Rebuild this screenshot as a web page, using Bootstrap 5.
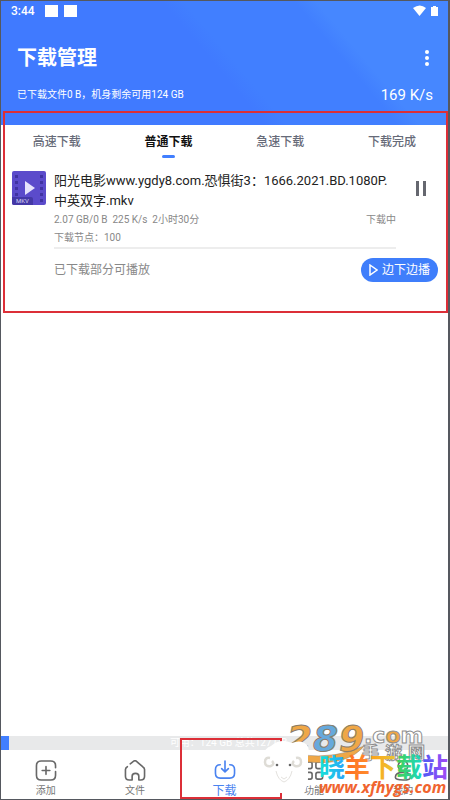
<!DOCTYPE html>
<html lang="zh-CN">
<head>
<meta charset="utf-8">
<meta name="viewport" content="width=device-width, initial-scale=1">
<title>下载管理</title>
<link href="https://cdn.jsdelivr.net/npm/bootstrap@5.3.0/dist/css/bootstrap.min.css" rel="stylesheet">
<style>
  body { font-family: Roboto, "Noto Sans CJK SC", sans-serif; font-size: 12px; background: #fff; color: #222; }
  .screen { border: 1px solid #55585f; border-right-width: 2px; }
  .app-head { background: linear-gradient(50deg, #407aff 0 48%, #417fff 52% 72%, #4687ff 76%); color: #fff; height: 124px; padding: 0 15px 0 16px; }
  .status { height: 20px; padding-left: 10px; margin-left: -16px; margin-right: -6px; }
  .status .clock { font-size: 12px; font-weight: 500; line-height: 20px; }
  .block-sq { width: 13px; height: 12px; background: #fff; margin-left: 6px; }
  .head-title { font-size: 20px; line-height: 28px; font-weight: 700; }
  .head-row { margin-top: 23px; }
  .head-info { margin-top: 13px; line-height: 20px; }
  .head-info .used { font-size: 10px; }
  .speed { font-size: 15px; }
  .plain { background: none; border: 0; padding: 0; color: inherit; }
  .tab { font-size: 12px; line-height: 18px; padding: 8px 0 0; color: #666a78; height: 34px; font-weight: 500; }
  .tab.active { color: #111; font-weight: 700; }
  .tab.active::after { content: ""; display: block; width: 13px; height: 3px; border-radius: 2px; background: #417fff; margin: 4px auto 0; }
  .item { padding: 12px 11px 0; }
  .thumb { margin-right: 8px; }
  .file-name { font-size: 13px; line-height: 20px; color: #222; overflow-wrap: anywhere; }
  .meta { font-size: 10px; line-height: 18px; color: #888; }
  .node-line { border-bottom: 2px solid #ededed; }
  .pause { width: 41px; height: 33px; padding-left: 9px; }
  .hint { font-size: 12px; color: #888; }
  .play-row { padding: 9px 10px 0 53px; }
  .play-btn { background: #3f7efb; color: #fff; border: 0; border-radius: 12px; height: 24px; width: 77px; font-size: 12px; line-height: 24px; }
  .storage { height: 14px; background: #e8e9ea; color: #fff; font-size: 10px; line-height: 14px; }
  .storage-used { width: 8px; background: #417fff; }
  .bottom a { height: 49px; padding-top: 10px; color: #777; font-size: 10px; line-height: 16px; }
  .bottom a svg { margin-bottom: 2px; }
  .bottom a.active { color: #4a83f0; font-size: 12px; }
  .outline { border: 2px solid #dc2f38; pointer-events: none; }
  .outline-list { left: 2px; right: 0; top: 110px; height: 202px; }
  .outline-tab { left: 179px; width: 102px; bottom: 0; height: 61px; }
  .stamp { right: 0; bottom: 0; width: 192px; height: 80px; pointer-events: none; }
  .stamp-name { font: 700 26px "Noto Sans CJK SC", sans-serif; }
  .stamp-url { font: italic 700 16px "Open Sans", sans-serif; fill: #f0642f; }
  .stamp-num { font: italic 700 36px "DejaVu Sans", sans-serif; fill: #efa747; stroke: #8b7c69; stroke-width: 1px; }
  .stamp-com { font: 700 22px "DejaVu Sans", sans-serif; fill: #fff; stroke: #8e8e8e; stroke-width: 1px; }
  .stamp-cn { font: 700 17px "Noto Sans CJK SC", sans-serif; fill: #fff; stroke: #8e8e8e; stroke-width: 1px; }
</style>
</head>
<body>
<div class="screen position-relative d-flex flex-column min-vh-100 overflow-hidden">
  <header class="app-head">
    <div class="status d-flex align-items-center">
      <span class="clock me-1">3:44</span>
      <span class="block-sq"></span><span class="block-sq"></span>
      <svg class="ms-auto" width="26" height="14" viewBox="0 0 26 14" fill="#fff" aria-hidden="true"><path d="M0 4Q7-1 13 4L6.500 12ZM18 3h2V2h3v1h2v9h-7z"/></svg>
    </div>
    <div class="head-row d-flex align-items-center justify-content-between">
      <h1 class="head-title mb-0">下载管理</h1>
      <button class="plain d-flex" type="button" aria-label="更多"><svg width="12" height="18" viewBox="0 0 12 18" fill="#fff"><circle cx="6" cy="3" r="2"/><circle cx="6" cy="9" r="2"/><circle cx="6" cy="15" r="2"/></svg></button>
    </div>
    <div class="head-info d-flex align-items-center justify-content-between">
      <span class="used">已下载文件0 B，机身剩余可用124 GB</span>
      <span class="speed">169 K/s</span>
    </div>
  </header>

  <main class="flex-grow-1">
    <nav class="d-flex align-items-start" aria-label="下载类型">
      <button class="tab plain d-flex flex-column align-items-center flex-fill w-25" type="button">高速下载</button>
      <button class="tab plain d-flex flex-column align-items-center flex-fill w-25 active" type="button">普通下载</button>
      <button class="tab plain d-flex flex-column align-items-center flex-fill w-25" type="button">急速下载</button>
      <button class="tab plain d-flex flex-column align-items-center flex-fill w-25" type="button">下载完成</button>
    </nav>
    <section class="item d-flex align-items-start">
      <svg class="thumb flex-shrink-0" width="34" height="34" viewBox="0 0 34 34" role="img" aria-label="MKV">
        <rect width="34" height="34" rx="2" fill="#5b4bcb"/>
        <path d="M4.500 4v22M29.500 4v28" stroke="#4033a2" stroke-width="3" stroke-dasharray="3 3"/>
        <path d="M0 26h19q2 0 2 2v6H2q-2 0-2-2z" fill="#4438a6"/>
        <path d="M13 10l10 7-10 7z" fill="#e6e3fc"/>
        <text x="4" y="32" font-size="6" fill="#d8d5f5">MKV</text>
      </svg>
      <div class="flex-grow-1">
        <div class="file-name">阳光电影www.ygdy8.com.恐惧街3：1666.2021.BD.1080P.<br>中英双字.mkv</div>
        <div class="meta d-flex justify-content-between"><span>2.07 GB/0 B&nbsp; 225 K/s&nbsp; 2小时30分</span><span>下载中</span></div>
        <div class="meta node-line">下载节点：100</div>
      </div>
      <button class="plain pause flex-shrink-0" type="button" aria-label="暂停"><svg width="12" height="15" viewBox="0 0 12 15" fill="#65676f"><path d="M1 0h3v15H1zM8 0h3v15H8z"/></svg></button>
    </section>
    <div class="play-row d-flex align-items-center justify-content-between">
      <span class="hint">已下载部分可播放</span>
      <button class="play-btn d-flex align-items-center justify-content-center p-0" type="button"><svg class="me-1" width="9" height="12" viewBox="0 0 9 12" fill="none" stroke="#fff" stroke-width="1.500"><path d="M1 1l7 5-7 5z"/></svg>边下边播</button>
    </div>
  </main>

  <div class="storage d-flex"><span class="storage-used"></span><span class="flex-grow-1 text-center">可用：124 GB 总共127 GB</span></div>
  <nav class="bottom d-flex text-center" aria-label="主导航">
    <a class="flex-fill w-25 text-decoration-none d-flex flex-column align-items-center" href="#add"><svg width="22" height="22" viewBox="0 0 22 22" fill="none" stroke="#686868" stroke-width="1.700" stroke-linecap="round"><path d="M21 8V6q0-5-5-5H6Q1 1 1 6v10q0 5 5 5h10q5 0 5-5v-4M11 7v8M7 11h8"/></svg>添加</a>
    <a class="flex-fill w-25 text-decoration-none d-flex flex-column align-items-center" href="#files"><svg width="22" height="22" viewBox="0 0 22 22" fill="none" stroke="#686868" stroke-width="1.700" stroke-linecap="round" stroke-linejoin="round"><path d="M6 4l4-3q1-.6 2 0l7 6q2 1 2 3v7q0 4-4 4h-2v-4q0-3-3.500-3T8 17v4H5q-4 0-4-4v-7q0-2 2-3"/></svg>文件</a>
    <a class="active flex-fill w-25 text-decoration-none d-flex flex-column align-items-center" href="#downloads" aria-current="page"><svg width="22" height="22" viewBox="0 0 22 22" fill="none" stroke="#4a83f0" stroke-width="1.700" stroke-linecap="round" stroke-linejoin="round"><path d="M6 5Q1 5 1 10v4q0 5 5 5h10q5 0 5-5v-4q0-5-5-5M11 1v11M7.500 9l3.500 3.500L14.500 9"/></svg>下载</a>
    <a class="flex-fill w-25 text-decoration-none d-flex flex-column align-items-center" href="#tools"><svg width="22" height="22" viewBox="0 0 22 22" fill="none" stroke="#686868" stroke-width="1.700"><rect x="2" y="2" width="7" height="7" rx="2"/><rect x="13" y="2" width="7" height="7" rx="2"/><rect x="2" y="13" width="7" height="7" rx="2"/><rect x="13" y="13" width="7" height="7" rx="2"/></svg>功能</a>
    <a class="flex-fill w-25 text-decoration-none d-flex flex-column align-items-center" href="#me"><svg width="22" height="22" viewBox="0 0 22 22" fill="none" stroke="#686868" stroke-width="1.700" stroke-linecap="round"><circle cx="11" cy="6" r="5"/><path d="M3 18q0-5 8-5t8 5q0 3-8 3t-8-3"/></svg>我的</a>
  </nav>

  <div class="outline outline-list position-absolute"></div>
  <div class="outline outline-tab position-absolute"></div>
  <svg class="stamp position-absolute" viewBox="0 0 192 80" role="img" aria-label="晓羊下载站">
    <defs>
      <linearGradient id="g1"><stop offset="0" stop-color="#14e5d8"/><stop offset="1" stop-color="#2ba4fa"/></linearGradient>
      <linearGradient id="g2"><stop offset="0" stop-color="#ff6c22"/><stop offset="1" stop-color="#ff8d2c"/></linearGradient>
      <linearGradient id="g3"><stop offset="0" stop-color="#ffa018"/><stop offset="1" stop-color="#e8c736"/></linearGradient>
      <linearGradient id="g4"><stop offset="0" stop-color="#45cf50"/><stop offset="1" stop-color="#18d8c6"/></linearGradient>
      <linearGradient id="g5"><stop offset="0" stop-color="#4b5af5"/><stop offset="1" stop-color="#a44af5"/></linearGradient>
    </defs>
    <path d="M46 36q34 4 62-9-16 20-56 16z" fill="#efa747" stroke="#8b7c69" stroke-width=".5"/>
    <text class="stamp-num" x="31" y="32">2</text>
    <text class="stamp-num" x="57" y="32" style="fill:#66a9dc">8</text>
    <text class="stamp-num" x="83" y="32">9</text>
    <text class="stamp-com" x="108" y="24">.c<tspan fill="#efa747">o</tspan>m</text>
    <text class="stamp-cn" x="106" y="40">手</text>
    <text class="stamp-cn" x="129" y="40">游</text>
    <text class="stamp-cn" x="152" y="40">网</text>
    <g transform="translate(5 -4)">
      <path d="M10 31q9-8 21-3 9-4 15 2 3 3 1 11v22q0 15-10 15H13Q3 78 3 68V42q-1-8 7-11z" fill="#fff"/>
      <path d="M9 43q-5-1-5 4t6 4q4-2 1-5M35 43q5-1 5 4t-6 4q-4-2-1-5" fill="none" stroke="#dedcd6" stroke-width="2.500"/>
      <path d="M15 56q2 9 8 11 6-2 8-11M20 62l3 2 3-2" fill="none" stroke="#e4e2de"/>
      <circle cx="16" cy="50" r="1.300" fill="#666"/><circle cx="29" cy="50" r="1.300" fill="#666"/>
    </g>
    <text class="stamp-name" x="63" y="58" fill="url(#g1)">晓</text>
    <text class="stamp-name" x="88" y="58" fill="url(#g2)">羊</text>
    <text class="stamp-name" x="114" y="58" fill="url(#g3)">下</text>
    <text class="stamp-name" x="140" y="58" fill="url(#g4)">载</text>
    <text class="stamp-name" x="166" y="58" fill="url(#g5)">站</text>
    <text class="stamp-url" x="63" y="74">www.xfhygs.com</text>
  </svg>
</div>
<script src="https://cdn.jsdelivr.net/npm/bootstrap@5.3.0/dist/js/bootstrap.bundle.min.js"></script>
</body>
</html>
